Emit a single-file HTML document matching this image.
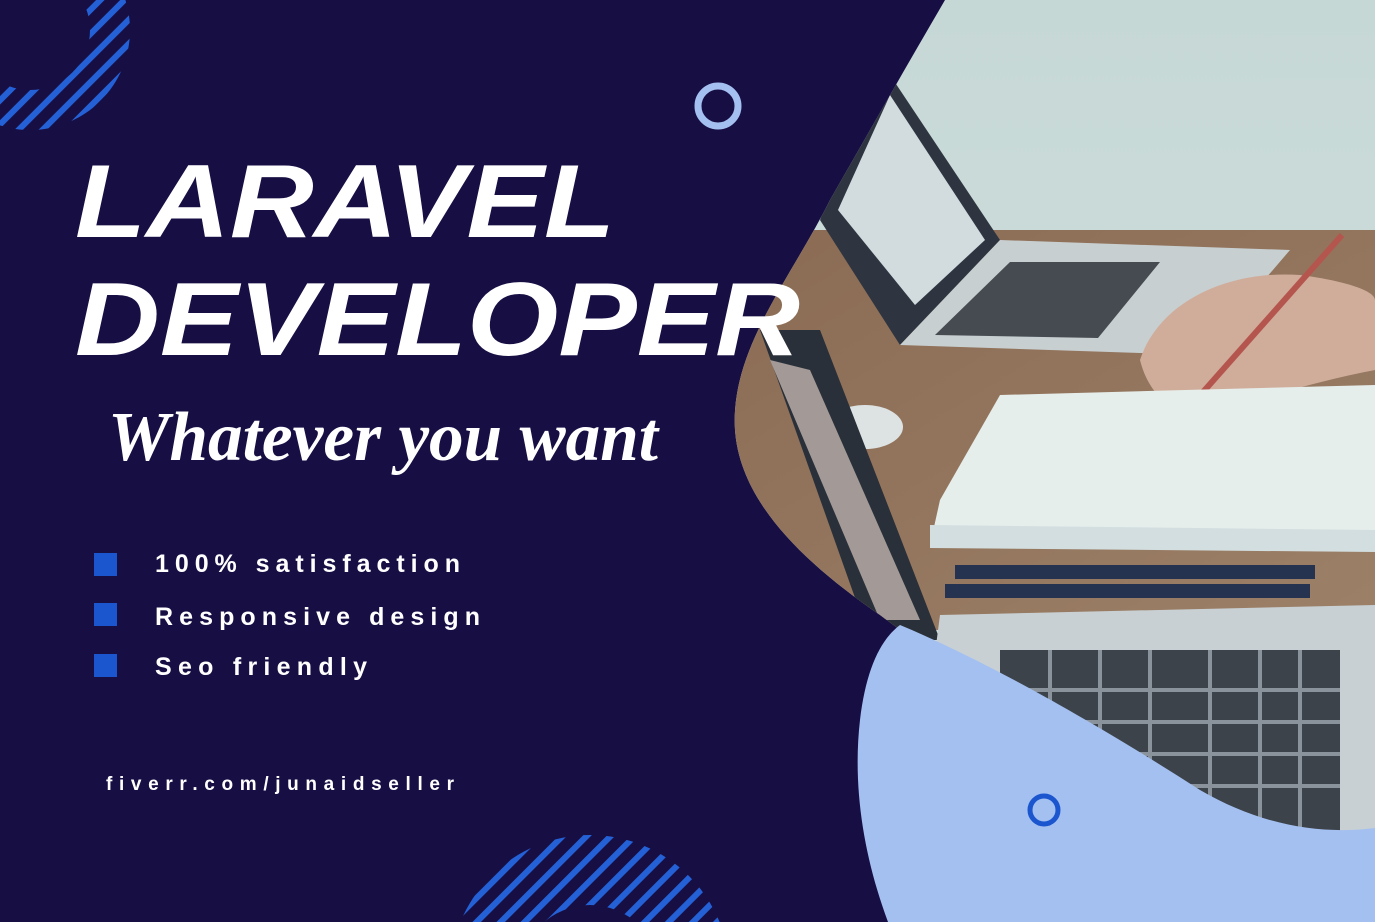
<!DOCTYPE html>
<html><head><meta charset="utf-8"><style>
html,body{margin:0;padding:0;width:1375px;height:922px;overflow:hidden;background:#170e44}
svg{display:block;position:absolute;left:0;top:0}
</style></head><body>
<svg width="1375" height="922" viewBox="0 0 1375 922" xmlns="http://www.w3.org/2000/svg">
<defs>
<pattern id="st" patternUnits="userSpaceOnUse" width="17" height="17" patternTransform="rotate(45)">
<rect x="0" y="0" width="6" height="17" fill="#2461d6"/>
</pattern>
<clipPath id="photo"><path d="M945 0 L1375 0 L1375 830 C1330 832 1280 835 1230 815 C1100 760 980 690 880 615 C800 560 740 500 735 430 C730 350 790 280 830 200 C870 130 910 60 945 0 Z"/></clipPath>
<linearGradient id="wall" x1="0" y1="0" x2="0" y2="1"><stop offset="0" stop-color="#c6d8d6"/><stop offset="1" stop-color="#d6e2df"/></linearGradient>
<linearGradient id="desk" x1="0" y1="0" x2="1" y2="1"><stop offset="0" stop-color="#8a6a52"/><stop offset="1" stop-color="#9c8068"/></linearGradient>
</defs>
<rect width="1375" height="922" fill="#170e44"/>
<path d="M30 30 m-100 0 a100 100 0 1 0 200 0 a100 100 0 1 0 -200 0 Z M30 30 m-60 0 a60 60 0 1 1 120 0 a60 60 0 1 1 -120 0 Z" fill="url(#st)" fill-rule="evenodd"/>
<path d="M590 975 m-140 0 a140 140 0 1 0 280 0 a140 140 0 1 0 -280 0 Z M590 975 m-70 0 a70 70 0 1 1 140 0 a70 70 0 1 1 -140 0 Z" fill="url(#st)" fill-rule="evenodd"/>
<g clip-path="url(#photo)">
<rect x="700" y="0" width="675" height="922" fill="url(#wall)"/>
<rect x="700" y="230" width="675" height="400" fill="url(#desk)"/>
<polygon points="880,60 1000,240 900,345 820,220" fill="#2e3540"/>
<polygon points="890,95 985,240 915,305 838,210" fill="#d2dcde"/>
<polygon points="900,345 1000,240 1290,250 1200,355" fill="#c8cfd1"/>
<polygon points="935,335 1010,262 1160,262 1098,338" fill="#464b52"/>
<path d="M1140 360 C1160 300 1230 270 1300 275 C1340 280 1375 290 1375 300 L1375 370 C1320 380 1260 400 1210 410 C1180 420 1150 400 1140 360 Z" fill="#d0ad9b"/>
<line x1="1165" y1="435" x2="1342" y2="235" stroke="#b5564e" stroke-width="6"/>
<polygon points="1000,395 1375,385 1375,530 930,545 940,500" fill="#e6eeec"/>
<polygon points="930,525 1375,530 1375,552 930,548" fill="#d2dedf"/>
<ellipse cx="865" cy="427" rx="38" ry="22" fill="#dde2e3"/>
<rect x="955" y="565" width="360" height="14" fill="#253250"/>
<rect x="945" y="584" width="365" height="14" fill="#253250"/>
<polygon points="760,330 820,330 940,640 870,640" fill="#2a3039"/>
<polygon points="770,360 810,370 920,620 880,620" fill="#a39a98"/>
<path d="M940 615 L1375 605 L1375 922 L900 922 Z" fill="#c8d0d4"/>
<rect x="1000" y="650" width="340" height="190" fill="#3c434b"/>
<g stroke="#8a939b" stroke-width="4">
<line x1="1000" y1="690" x2="1340" y2="690"/><line x1="1000" y1="722" x2="1340" y2="722"/><line x1="1000" y1="754" x2="1340" y2="754"/><line x1="1000" y1="786" x2="1340" y2="786"/>
<line x1="1050" y1="650" x2="1050" y2="840"/><line x1="1100" y1="650" x2="1100" y2="840"/><line x1="1150" y1="650" x2="1150" y2="840"/><line x1="1210" y1="650" x2="1210" y2="840"/><line x1="1260" y1="650" x2="1260" y2="840"/><line x1="1300" y1="650" x2="1300" y2="840"/>
</g>
</g>
<path d="M900 625 C960 650 1060 700 1200 790 C1260 825 1320 835 1375 828 L1375 922 L888 922 C865 860 852 790 860 720 C866 670 880 640 900 625 Z" fill="#a4c0f0"/>
<circle cx="718" cy="106" r="20" fill="none" stroke="#a4c0f0" stroke-width="7"/>
<circle cx="1044" cy="810" r="14" fill="none" stroke="#1b56cf" stroke-width="5"/>
<g font-family="Liberation Sans, sans-serif" font-weight="bold" font-style="italic" fill="#ffffff">
<text x="75" y="237" font-size="104" textLength="540" lengthAdjust="spacingAndGlyphs">LARAVEL</text>
<text x="75" y="355" font-size="104" textLength="725" lengthAdjust="spacingAndGlyphs">DEVELOPER</text>
</g>
<text x="108" y="460" font-family="Liberation Serif, serif" font-style="italic" font-weight="bold" font-size="70" fill="#ffffff" textLength="550" lengthAdjust="spacingAndGlyphs">Whatever you want</text>
<g fill="#1b56cf"><rect x="94" y="553" width="23" height="23"/><rect x="94" y="603" width="23" height="23"/><rect x="94" y="654" width="23" height="23"/></g>
<g font-family="Liberation Sans, sans-serif" font-weight="bold" fill="#ffffff" font-size="25">
<text x="155" y="572" textLength="305" lengthAdjust="spacing">100% satisfaction</text>
<text x="155" y="625" textLength="325" lengthAdjust="spacing">Responsive design</text>
<text x="155" y="675" textLength="212" lengthAdjust="spacing">Seo friendly</text>
<text x="106" y="790" font-size="19" textLength="348" lengthAdjust="spacing">fiverr.com/junaidseller</text>
</g>
</svg>
</body></html>
